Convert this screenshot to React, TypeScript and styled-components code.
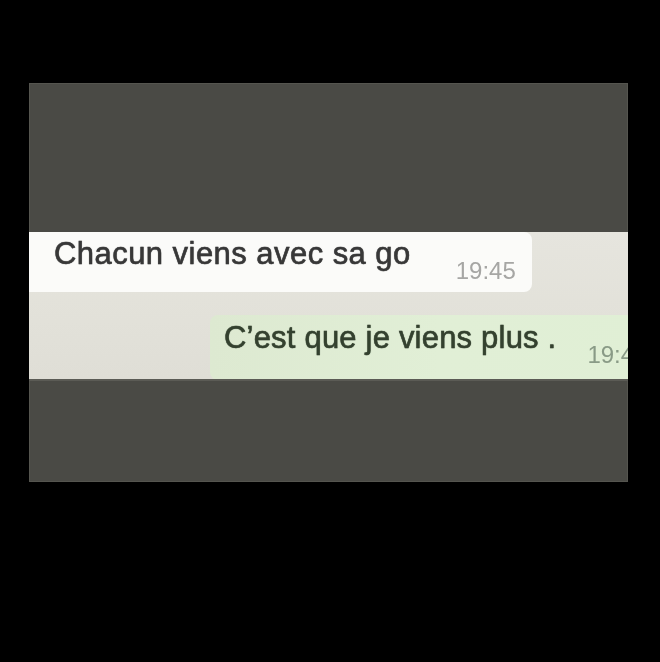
import styled, { createGlobalStyle } from 'styled-components';

const GlobalStyle = createGlobalStyle`
  html, body {
    margin: 0;
    padding: 0;
    background: #000000;
  }

  body {
    width: 660px;
    height: 662px;
    overflow: hidden;
    font-family: "Liberation Sans", Arial, sans-serif;
  }
`;

const Page = styled.div`
  width: 660px;
  height: 662px;
  padding: 83px 0 0 29px;
  box-sizing: border-box;
  background: #000000;
`;

const Screen = styled.div`
  display: flex;
  flex-direction: column;
  width: 599px;
  height: 399px;
  background: #4a4a45;
  box-shadow: inset 0 0 0 1px #55554f;
  overflow: hidden;
`;

const Spacer = styled.div<{ $height: number }>`
  flex: 0 0 ${({ $height }) => $height}px;
`;

const Chat = styled.div`
  display: flex;
  flex-direction: column;
  gap: 23px;
  height: 149px;
  box-sizing: border-box;
  background: linear-gradient(180deg, #e6e5de 0%, #e2e1d9 60%, #dfded6 100%);
  border-bottom: 2px solid #5b5b55;
  overflow: hidden;
  filter: blur(0.5px);
`;

const Bubble = styled.div<{ $out?: boolean }>`
  display: flex;
  flex-shrink: 0;
  white-space: nowrap;
  box-sizing: border-box;
  height: ${({ $out }) => ($out ? 65 : 60)}px;
  width: ${({ $out }) => ($out ? '460px' : '503px')};
  margin-left: ${({ $out }) => ($out ? '181px' : '0')};
  padding: ${({ $out }) => ($out ? '5px 0 0 14px' : '4px 0 0 25px')};
  background: ${({ $out }) =>
    $out ? 'linear-gradient(90deg, #dde9d1 0%, #e1efd6 50%, #e0efd5 100%)' : '#fbfbf9'};
  border-radius: ${({ $out }) => ($out ? '8px 0 0 8px' : '0 8px 8px 0')};
`;

const Text = styled.span<{ $out?: boolean }>`
  font-size: 31px;
  line-height: 36px;
  letter-spacing: ${({ $out }) => ($out ? '0.2px' : '0.45px')};
  color: ${({ $out }) => ($out ? '#34412f' : '#383838')};
  -webkit-text-stroke: 0.5px ${({ $out }) => ($out ? '#34412f' : '#383838')};
  text-shadow: 0 0 1px ${({ $out }) => ($out ? 'rgba(40, 55, 38, 0.7)' : 'rgba(40, 40, 40, 0.7)')};
`;

const Time = styled.span<{ $gap: number; $out?: boolean }>`
  align-self: flex-start;
  margin: 21px 0 0 ${({ $gap }) => $gap}px;
  font-size: 24px;
  line-height: 28px;
  color: ${({ $out }) => ($out ? '#899a86' : '#a6a6a4')};
`;

export default function App() {
  return (
    <>
      <GlobalStyle />
      <Page>
        <Screen>
          <Spacer $height={149} />
          <Chat>
            <Bubble>
              <Text>Chacun viens avec sa go</Text>
              <Time $gap={45}>19:45</Time>
            </Bubble>
            <Bubble $out>
              <Text $out>C’est que je viens plus .</Text>
              <Time $gap={31} $out>19:46</Time>
            </Bubble>
          </Chat>
          <Spacer $height={101} />
        </Screen>
      </Page>
    </>
  );
}
